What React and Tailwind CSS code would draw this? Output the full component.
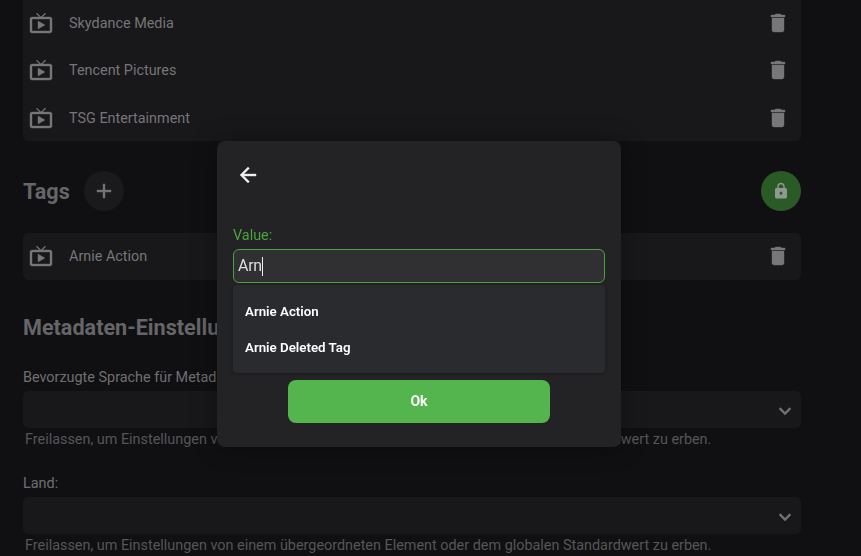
const tvPath =
  "M21 6h-7.59l3.29-3.29L16 2l-4 4-4-4-.71.71L10.59 6H3c-1.1 0-2 .89-2 2v12c0 1.1.9 2 2 2h18c1.1 0 2-.9 2-2V8c0-1.11-.9-2-2-2zm0 14H3V8h18v12zM9 10v8l7-4z";
const trashPath =
  "M6 19c0 1.1.9 2 2 2h8c1.1 0 2-.9 2-2V7H6v12zM19 4h-3.5l-1-1h-5l-1 1H5v2h14V4z";
const lockPath =
  "M18 8h-1V6c0-2.76-2.24-5-5-5S7 3.24 7 6v2H6c-1.1 0-2 .9-2 2v10c0 1.1.9 2 2 2h12c1.1 0 2-.9 2-2V10c0-1.1-.9-2-2-2zm-6 9c-1.1 0-2-.9-2-2s.9-2 2-2 2 .9 2 2-.9 2-2 2zm3.1-9H8.9V6c0-1.71 1.39-3.1 3.1-3.1 1.71 0 3.1 1.39 3.1 3.1v2z";
const addPath = "M19 13h-6v6h-2v-6H5v-2h6V5h2v6h6v2z";
const backPath = "M20 11H7.83l5.59-5.59L12 4l-8 8 8 8 1.41-1.41L7.83 13H20v-2z";
const chevronPath = "M16.59 8.59L12 13.17 7.41 8.59 6 10l6 6 6-6z";

const Icon = ({ d, className }) => (
  <svg
    viewBox="0 0 24 24"
    fill="currentColor"
    stroke="currentColor"
    strokeWidth="0.4"
    className={`w-6 h-6 shrink-0 ${className || ""}`}
  >
    <path d={d} />
  </svg>
);

const Row = ({ label, className }) => (
  <div className={`h-[47.4px] flex items-center pl-[6px] pr-[11px] ${className || ""}`}>
    <Icon d={tvPath} className="text-[#777679]" />
    <span className="ml-4 pt-[1.5px] text-[14.4px] text-[#767578]">{label}</span>
    <Icon d={trashPath} className="ml-auto text-[#777679]" />
  </div>
);

const SelectField = ({ label, className }) => (
  <div className={className}>
    <div className="h-[21px] leading-[21px] text-[14.4px] text-[#6f6e71]">{label}</div>
    <div className="mt-[3px] h-[37px] rounded-[5px] bg-[#18171a] flex items-center justify-end pr-1 pt-[3px]">
      <Icon d={chevronPath} className="text-[#737275]" />
    </div>
    <div className="mt-[1px] ml-[2px] h-[21px] leading-[21px] text-[14.4px] text-[#565558] whitespace-nowrap">
      Freilassen, um Einstellungen von einem übergeordneten Element oder dem globalen Standardwert zu erben.
    </div>
  </div>
);

const TagDialog = () => (
  <div className="absolute left-[217px] top-[141px] w-[404px] h-[306px] rounded-lg bg-[#232225] px-4 shadow-[0_0_24px_rgba(0,0,0,0.35)]">
    <div className="pt-[22px] pl-[3px]">
      <Icon d={backPath} className="text-[#eeeeee]" />
    </div>
    <div className="mt-[38px] h-[21px] leading-[21px] text-[14.4px] text-[#4ba33f]">Value:</div>
    <div className="h-[34px] mt-[3px] rounded-md border border-[#4ba33f] bg-[#302f32] flex items-center pl-[4px] text-base text-[#dddddd]">
      <span className="tracking-[-0.3px]">Arn</span>
      <span className="w-px h-[19px] bg-[#eeeeee]" />
    </div>
    <div className="mt-[2px] h-[88px] rounded bg-[#2a2b2f] pt-[9px] pb-[7px] shadow-[0_1px_3px_rgba(0,0,0,0.3)]">
      <div className="h-9 flex items-center px-3 text-[13.3px] font-semibold text-white">Arnie Action</div>
      <div className="h-9 flex items-center px-3 text-[13.3px] font-semibold text-white">Arnie Deleted Tag</div>
    </div>
    <button className="block mx-auto mt-[7px] w-[262px] h-[43px] pb-[2px] rounded-lg bg-[#54b54f] text-sm font-bold text-white">
      Ok
    </button>
  </div>
);

export default function App() {
  return (
    <div className="relative h-[556px] overflow-hidden bg-[#101012] font-['Roboto',sans-serif]">
      <div className="pl-[23px] pr-[60px]">
        <div className="-mt-[0.7px] rounded-b-[5px] bg-[#18171a]">
          <Row label="Skydance Media" />
          <Row label="Tencent Pictures" />
          <Row label="TSG Entertainment" />
        </div>

        <div className="mt-[29.5px] h-[41px] flex items-center">
          <h2 className="mt-[2px] text-[21.6px] font-bold text-[#666568]">Tags</h2>
          <div className="ml-[14px] w-10 h-10 rounded-full bg-[#1a191c] flex items-center justify-center">
            <Icon d={addPath} className="text-[#737275]" />
          </div>
          <div className="ml-auto w-10 h-10 rounded-full bg-[#2a5a26] flex items-center justify-center">
            <svg viewBox="0 0 24 24" fill="currentColor" className="w-[18px] h-[18px] text-[#8f9a8e]">
              <path d={lockPath} />
            </svg>
          </div>
        </div>

        <Row label="Arnie Action" className="mt-[20.7px] rounded-[5px] bg-[#18171a]" />

        <h2 className="mt-[34px] h-[28px] leading-[28px] text-[21.6px] font-bold text-[#666568] whitespace-nowrap">
          Metadaten-Einstellungen
        </h2>
        <SelectField label="Bevorzugte Sprache für Metadaten:" className="mt-[24.5px]" />
        <SelectField label="Land:" className="mt-[23px]" />
      </div>

      {/* backdrop behind the dialog softens the page a little */}
      <div className="absolute inset-0 backdrop-blur-[0.5px]" />
      <TagDialog />
    </div>
  );
}
